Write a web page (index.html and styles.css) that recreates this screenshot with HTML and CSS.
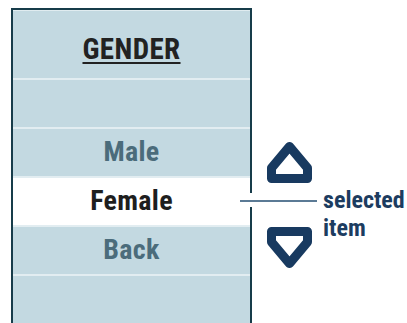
FILE: index.html
```html
<!DOCTYPE html>
<html lang="en">
<head>
  <meta charset="UTF-8">
  <title>Gender Menu</title>
  <link rel="stylesheet" href="styles.css">
</head>
<body>

  <div class="screen">
    <div class="menu">
      <div class="menu-title"><span>GENDER</span></div>
      <div class="menu-row"></div>
      <div class="menu-row">Male</div>
      <div class="menu-row selected">Female</div>
      <div class="menu-row">Back</div>
      <div class="menu-row empty"></div>
    </div>

    <div class="nav">
      <svg class="arrow" width="46" height="43" viewBox="0 0 46 43">
        <path d="M5.5 37.5 L5.5 27 L23.5 5.5 L41.5 27 L41.5 37.5 Z" />
      </svg>
      <svg class="arrow down" width="46" height="43" viewBox="0 0 46 43">
        <path d="M5.5 5.5 L41.5 5.5 L41.5 16 L23.5 37.5 L5.5 16 Z" />
      </svg>
    </div>

    <div class="callout">
      <span class="callout-line"></span>
      <span class="callout-text">selected<br>item</span>
    </div>
  </div>

</body>
</html>
```

FILE: styles.css
```css
body {
    margin: 0;
    background-color: #fff;
    font-family: 'Roboto Condensed', 'Roboto', sans-serif;
    font-weight: bold;
}

.screen {
    position: relative;
    display: flex;
    height: 323px;
    overflow: hidden;
    padding: 8px 0 0 11px;
    box-sizing: border-box;
}

.menu {
    width: 241px;
    flex-shrink: 0;
    background-color: #c3d9e1;
    border: 2px solid #173c4a;
    border-bottom: none;
    box-sizing: border-box;
    height: 340px;
}

.menu-title {
    height: 70px;
    box-sizing: border-box;
    padding-top: 24px;
    text-align: center;
    font-size: 29px;
    line-height: 28px;
    letter-spacing: 0.4px;
    color: #222;
    border-top: 1px solid #e0ecf0;
    border-bottom: 2px solid #e2edf1;
}

.menu-title span {
    text-decoration: underline;
    text-decoration-thickness: 2px;
    text-underline-offset: 3px;
}

.menu-row {
    height: 49px;
    box-sizing: border-box;
    text-align: center;
    font-size: 28px;
    line-height: 46px;
    letter-spacing: 0.3px;
    color: #4b6c7b;
    border-bottom: 2px solid #e2edf1;
}

.menu-row.selected {
    background-color: #fff;
    color: #1e1e1e;
}

.menu-row.empty {
    border-bottom: none;
}

.nav {
    display: flex;
    flex-direction: column;
    gap: 42px;
    padding: 133px 0 0 14px;
}

.arrow path {
    fill: none;
    stroke: #183a60;
    stroke-width: 9;
    stroke-linejoin: round;
}

.callout {
    position: absolute;
    left: 240px;
    top: 186px;
    display: flex;
    align-items: flex-start;
}

.callout-line {
    width: 77px;
    height: 2px;
    margin-top: 7px;
    background-color: #5b7a95;
    border-top: 7px solid #fff;
    border-bottom: 5px solid #fff;
}

.callout-text {
    padding-left: 6px;
    font-size: 24px;
    line-height: 28px;
    color: #1c3c60;
}
```
